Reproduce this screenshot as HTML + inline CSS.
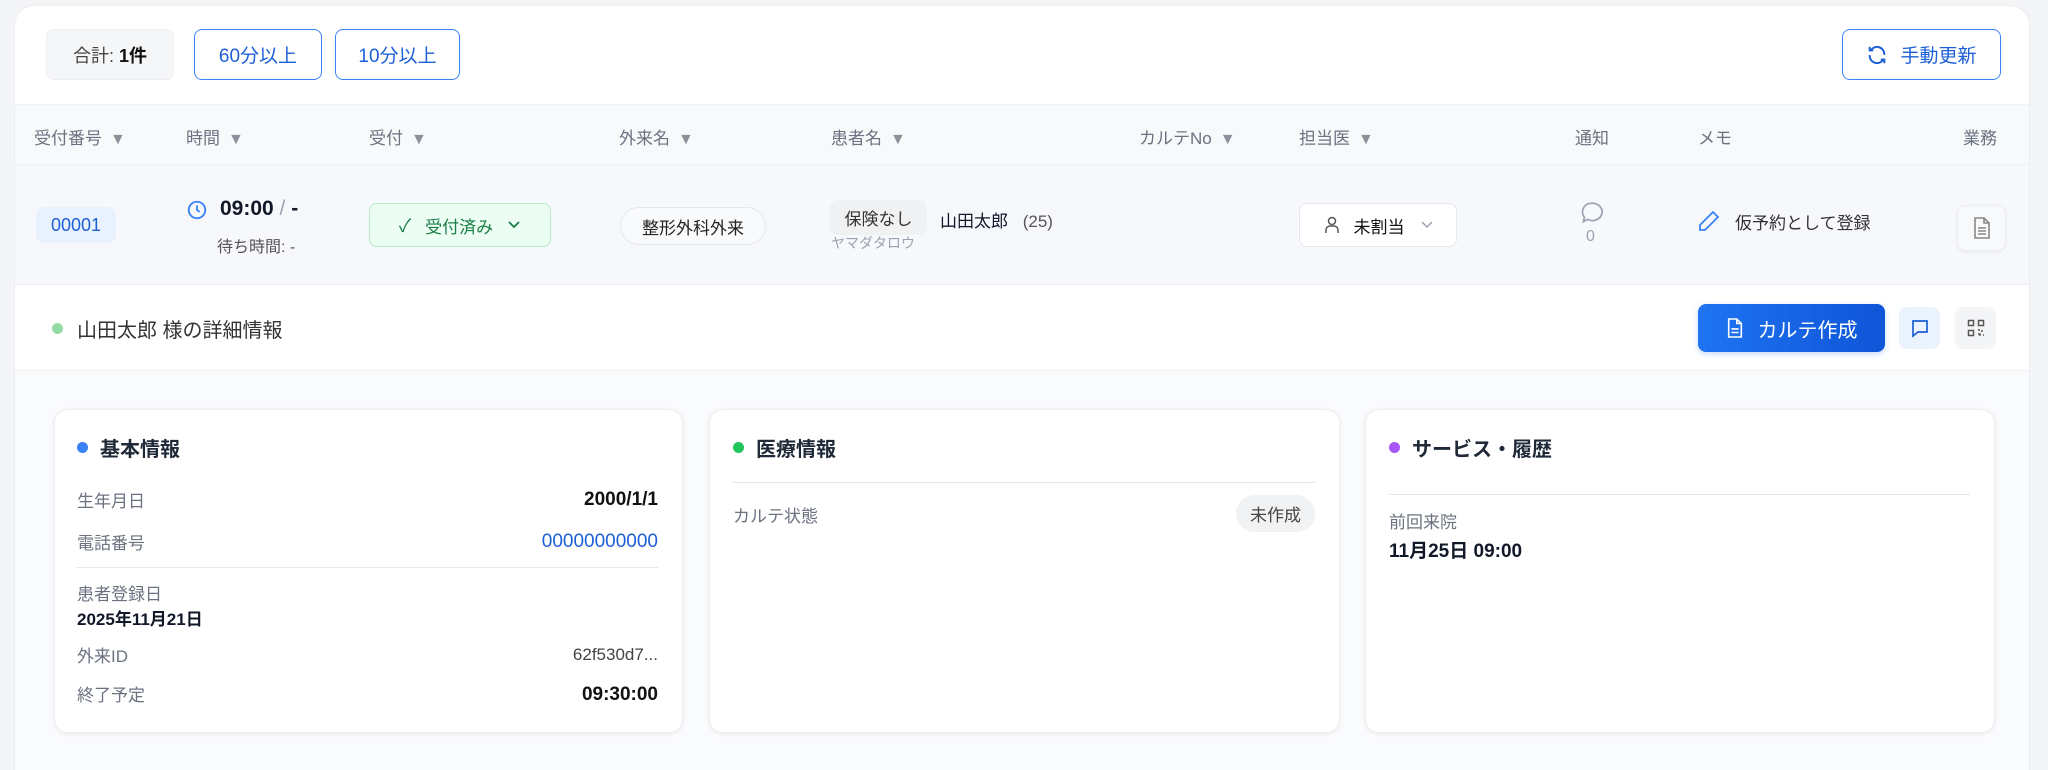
<!DOCTYPE html>
<html><head><meta charset="utf-8"><style>
*{box-sizing:border-box;margin:0;padding:0}
html,body{width:2048px;height:770px;overflow:hidden}
body{background:#f4f5f7;font-family:"Liberation Sans","Noto Sans CJK JP",sans-serif;color:#111827;position:relative}
.a{position:absolute}
.card{left:14px;top:5px;width:2016px;height:765px;background:#fff;border-radius:20px 20px 0 0;border:1px solid #eceef2;border-bottom:none;overflow:hidden}
.btn{display:flex;align-items:center;justify-content:center;border-radius:8px;font-size:19px}
.ob{border:1.5px solid #3b82f6;color:#1d5fd6;background:#fff}
.hd{font-size:17px;color:#6b7280;top:124px}
.tri{color:#8b9099;font-size:16px;margin-left:8px}
.lbl{font-size:17px;color:#6b7280}
.val{font-size:19px;color:#111}
.sc{background:#fff;border-radius:14px;box-shadow:0 1px 4px rgba(0,0,0,.08);border:1px solid #eef0f3;top:409px;height:324px}
.ttl{font-size:20px;font-weight:bold;color:#1f2937;display:flex;align-items:center}
.dot{width:11px;height:11px;border-radius:50%;display:inline-block;margin-right:12px}
</style></head><body>
<div class="a card"></div>
<div class="a btn" style="left:46px;top:29px;width:128px;height:51px;background:#f5f6f8;border:1px solid #eceef1;color:#444;font-size:18px">合計:&nbsp;<b style="color:#111;font-weight:600">1件</b></div>
<div class="a btn ob" style="left:194px;top:29px;width:128px;height:51px">60分以上</div>
<div class="a btn ob" style="left:335px;top:29px;width:125px;height:51px">10分以上</div>
<div class="a btn ob" style="left:1842px;top:29px;width:159px;height:51px"><svg width="22" height="22" viewBox="0 0 24 24" fill="none" stroke="#1d5fd6" stroke-width="2.2" stroke-linecap="round" style="margin-right:12px"><path d="M20 11a8 8 0 0 0-14.5-4.5M4 4v3h3M4 13a8 8 0 0 0 14.5 4.5M20 20v-3h-3"/></svg>手動更新</div>

<div class="a" style="left:15px;top:104px;width:2014px;height:61px;background:#f8f9fb;border-top:1px solid #f0f1f4;border-bottom:1px solid #eef0f3"></div>
<div class="a hd" style="left:34px">受付番号<span class="tri">▼</span></div>
<div class="a hd" style="left:186px">時間<span class="tri">▼</span></div>
<div class="a hd" style="left:369px">受付<span class="tri">▼</span></div>
<div class="a hd" style="left:619px">外来名<span class="tri">▼</span></div>
<div class="a hd" style="left:831px">患者名<span class="tri">▼</span></div>
<div class="a hd" style="left:1139px">カルテNo<span class="tri">▼</span></div>
<div class="a hd" style="left:1299px">担当医<span class="tri">▼</span></div>
<div class="a hd" style="left:1575px">通知</div>
<div class="a hd" style="left:1698px">メモ</div>
<div class="a hd" style="left:1963px">業務</div>

<div class="a" style="left:15px;top:165px;width:2014px;height:120px;background:#f6f8fc;border-bottom:1px solid #eef0f4"></div>
<div class="a btn" style="left:36px;top:207px;width:80px;height:36px;background:#e8f1fd;color:#1d5fd6;font-size:18px">00001</div>
<svg class="a" style="left:186px;top:199px" width="22" height="22" viewBox="0 0 24 24" fill="none" stroke="#3b82f6" stroke-width="2"><circle cx="12" cy="12" r="9"/><path d="M12 7v5l3 2"/></svg>
<div class="a" style="left:220px;top:197px;font-size:21px;font-weight:600">09:00 <span style="color:#9ca3af;font-weight:400">/</span> -</div>
<div class="a" style="left:217px;top:233px;font-size:16px;color:#555">待ち時間: -</div>
<div class="a btn" style="left:369px;top:203px;width:182px;height:44px;background:#ecfdf3;border:1px solid #b7ebc9;color:#1a7f46;font-size:17px"><span style="margin-right:14px;font-size:18px">✓</span>受付済み<svg style="margin-left:14px" width="14" height="10" viewBox="0 0 14 10" fill="none" stroke="#1a7f46" stroke-width="1.8"><path d="M2 2l5 5 5-5"/></svg></div>
<div class="a btn" style="left:620px;top:207px;width:146px;height:38px;border:1px solid #e5e7eb;border-radius:19px;background:#f9fafb;font-size:17px;color:#222">整形外科外来</div>
<div class="a btn" style="left:830px;top:200px;width:97px;height:35px;background:#f0f1f3;color:#333;font-size:17px">保険なし</div>
<div class="a" style="left:940px;top:207px;font-size:17px">山田太郎 <span style="color:#555;margin-left:10px">(25)</span></div>
<div class="a" style="left:831px;top:233px;font-size:14px;color:#9ca3af">ヤマダタロウ</div>
<div class="a btn" style="left:1299px;top:203px;width:158px;height:44px;background:#fff;border:1px solid #e5e7eb;font-size:17px;color:#111"><svg width="16" height="18" viewBox="0 0 16 18" fill="none" stroke="#555" stroke-width="1.5" style="margin-right:14px"><circle cx="8" cy="5" r="3.5"/><path d="M2 17v-3a4 4 0 0 1 4-4h4a4 4 0 0 1 4 4v3"/></svg>未割当<svg style="margin-left:16px" width="12" height="8" viewBox="0 0 12 8" fill="none" stroke="#9ca3af" stroke-width="1.5"><path d="M1 1l5 5 5-5"/></svg></div>
<svg class="a" style="left:1579px;top:200px" width="26" height="26" viewBox="0 0 24 24" fill="none" stroke="#9ca3af" stroke-width="1.6"><path d="M12 3a9 8 0 1 1-4 15l-4 2 1-4A8 8 0 0 1 12 3z"/></svg>
<div class="a" style="left:1586px;top:228px;font-size:16px;color:#9ca3af">0</div>
<svg class="a" style="left:1697px;top:209px" width="24" height="24" viewBox="0 0 24 24" fill="none" stroke="#3b82f6" stroke-width="1.8"><path d="M16 3l5 5L8 21H3v-5z"/></svg>
<div class="a" style="left:1735px;top:209px;font-size:17px;color:#333">仮予約として登録</div>
<div class="a btn" style="left:1957px;top:205px;width:49px;height:46px;background:#f8f9fb;border:1px solid #eceef1;box-shadow:0 1px 3px rgba(0,0,0,.06)"><svg width="20" height="24" viewBox="0 0 20 24" fill="none" stroke="#888" stroke-width="1.6"><path d="M3 2h9l5 5v15H3z M12 2v5h5 M6 12h8 M6 15h8 M6 18h8"/></svg></div>

<div class="a" style="left:52px;top:323px;width:11px;height:11px;border-radius:50%;background:#94dba3"></div>
<div class="a" style="left:77px;top:314px;font-size:20px;color:#333">山田太郎 様の詳細情報</div>
<div class="a btn" style="left:1698px;top:304px;width:187px;height:48px;background:linear-gradient(90deg,#1e74f2,#0f55d8);color:#fff;font-size:20px;box-shadow:0 2px 6px rgba(30,100,230,.25)"><svg width="18" height="22" viewBox="0 0 20 24" fill="none" stroke="#fff" stroke-width="1.8" style="margin-right:14px"><path d="M3 2h9l5 5v15H3z M12 2v5h5 M6 13h8 M6 17h8"/></svg>カルテ作成</div>
<div class="a btn" style="left:1899px;top:307px;width:41px;height:42px;background:#eaf3fe"><svg width="20" height="20" viewBox="0 0 20 20" fill="none" stroke="#1d5fd6" stroke-width="1.7"><path d="M3 3h14v11H8l-5 4z"/></svg></div>
<div class="a btn" style="left:1955px;top:307px;width:41px;height:42px;background:#f4f5f7"><svg width="18" height="18" viewBox="0 0 18 18" fill="none" stroke="#555" stroke-width="1.5"><rect x="1.5" y="1.5" width="5" height="5"/><rect x="11.5" y="1.5" width="5" height="5"/><rect x="1.5" y="11.5" width="5" height="5"/><path d="M11 11h2M15 11v2M11 15h2v2M16 16h1"/></svg></div>

<div class="a" style="left:15px;top:370px;width:2014px;height:400px;background:#fafbfd;border-top:1px solid #eef0f3"></div>

<div class="a sc" style="left:54px;width:629px"></div>
<div class="a ttl" style="left:77px;top:433px"><span class="dot" style="background:#3b82f6"></span>基本情報</div>
<div class="a lbl" style="left:77px;top:487px">生年月日</div>
<div class="a val" style="right:1390px;top:489px;font-weight:600">2000/1/1</div>
<div class="a lbl" style="left:77px;top:529px">電話番号</div>
<div class="a val" style="right:1390px;top:531px;color:#1d5fd6">00000000000</div>
<div class="a" style="left:77px;top:567px;width:581px;height:1px;background:#e5e7eb"></div>
<div class="a lbl" style="left:77px;top:580px">患者登録日</div>
<div class="a" style="left:77px;top:605px;font-size:17px;font-weight:600">2025年11月21日</div>
<div class="a lbl" style="left:77px;top:642px">外来ID</div>
<div class="a" style="right:1390px;top:645px;font-size:17px;color:#444">62f530d7...</div>
<div class="a lbl" style="left:77px;top:681px">終了予定</div>
<div class="a val" style="right:1390px;top:684px;font-weight:600">09:30:00</div>

<div class="a sc" style="left:709px;width:631px"></div>
<div class="a ttl" style="left:733px;top:433px"><span class="dot" style="background:#22c55e"></span>医療情報</div>
<div class="a" style="left:733px;top:482px;width:582px;height:1px;background:#e5e7eb"></div>
<div class="a lbl" style="left:733px;top:502px">カルテ状態</div>
<div class="a btn" style="left:1236px;top:495px;width:79px;height:37px;border-radius:19px;background:#f1f2f4;color:#444;font-size:17px">未作成</div>

<div class="a sc" style="left:1365px;width:630px"></div>
<div class="a ttl" style="left:1389px;top:433px"><span class="dot" style="background:#a855f7"></span>サービス・履歴</div>
<div class="a" style="left:1389px;top:494px;width:581px;height:1px;background:#e5e7eb"></div>
<div class="a lbl" style="left:1389px;top:508px">前回来院</div>
<div class="a" style="left:1389px;top:536px;font-size:19px;font-weight:600">11月25日 09:00</div>
</body></html>
